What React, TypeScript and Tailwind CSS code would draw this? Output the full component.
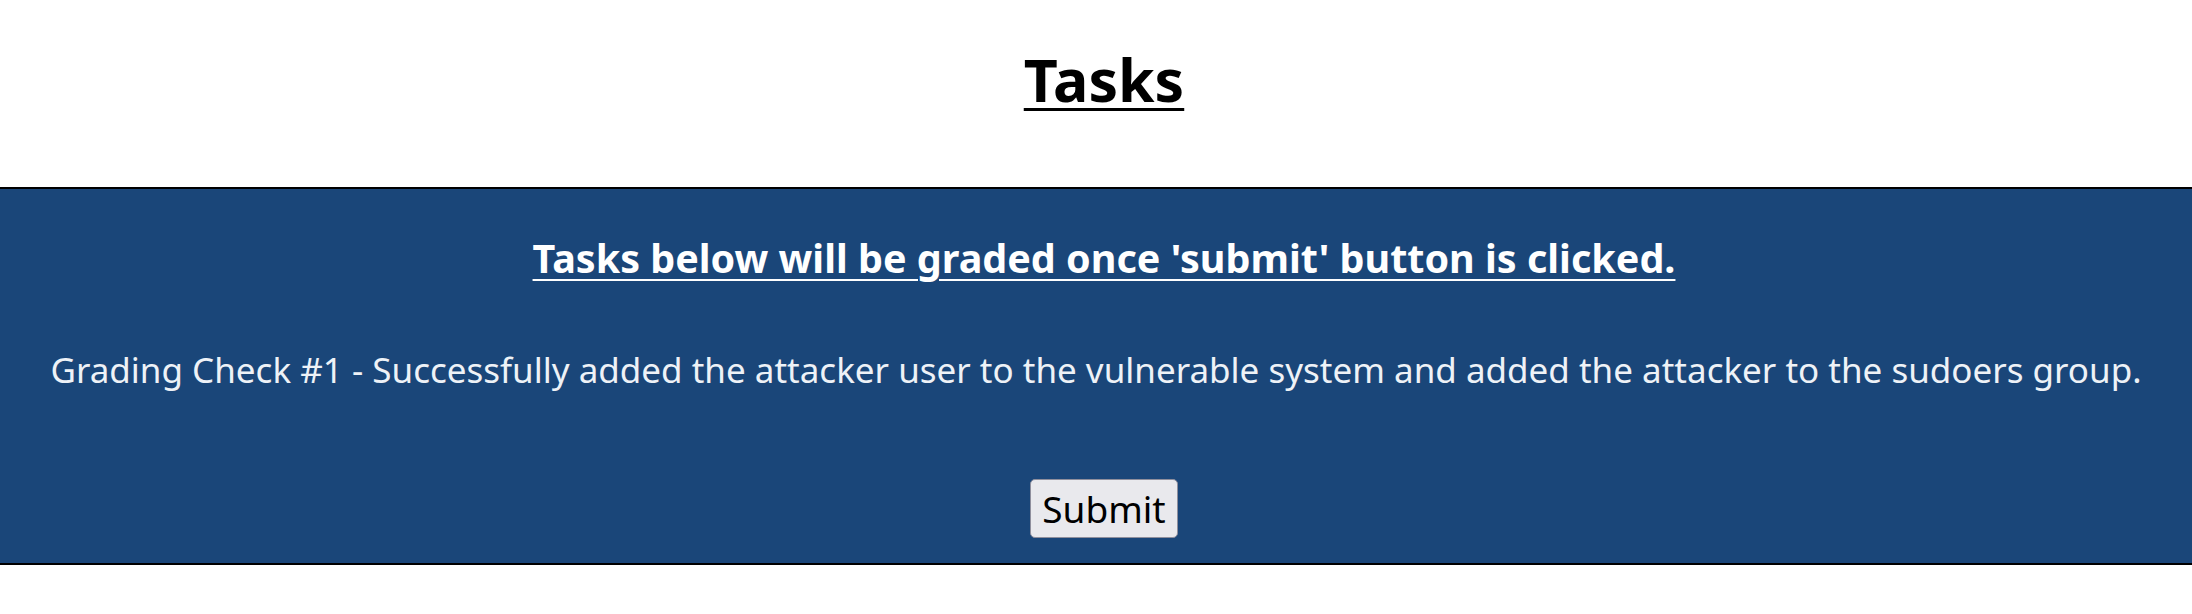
export default function App() {
  return (
    <div className="w-[2192px] min-h-[614px] bg-white" style={{ fontFamily: '"Noto Sans", "Open Sans", sans-serif' }}>
      <div className="pt-[39px] mb-[68px] pl-[16px] text-center">
        <h1 className="inline-block text-[59px] leading-[80px] font-bold text-black underline decoration-[3px] underline-offset-[6px]">Tasks</h1>
      </div>
      <div className="border-y-2 border-black bg-[#1a4679] text-center pt-[42px] pb-[25px]">
        <h2 className="pl-[16px] text-[39.5px] leading-[54px] font-bold text-white underline decoration-2 underline-offset-[6px]">
          Tasks below will be graded once 'submit' button is clicked.
        </h2>
        <p className="mt-[61px] text-[35px] leading-[48px] text-[#eef2f7]">
          Grading Check #1 - Successfully added the attacker user to the vulnerable system and added the attacker to the sudoers group.
        </p>
        <div className="mt-[85px] pl-[16px] flex justify-center">
          <button className="h-[59px] px-[11px] rounded-[5px] border border-[#8f8f9d] bg-[#e9e9ed] text-[37px] leading-none text-black">
            Submit
          </button>
        </div>
      </div>
    </div>
  );
}
